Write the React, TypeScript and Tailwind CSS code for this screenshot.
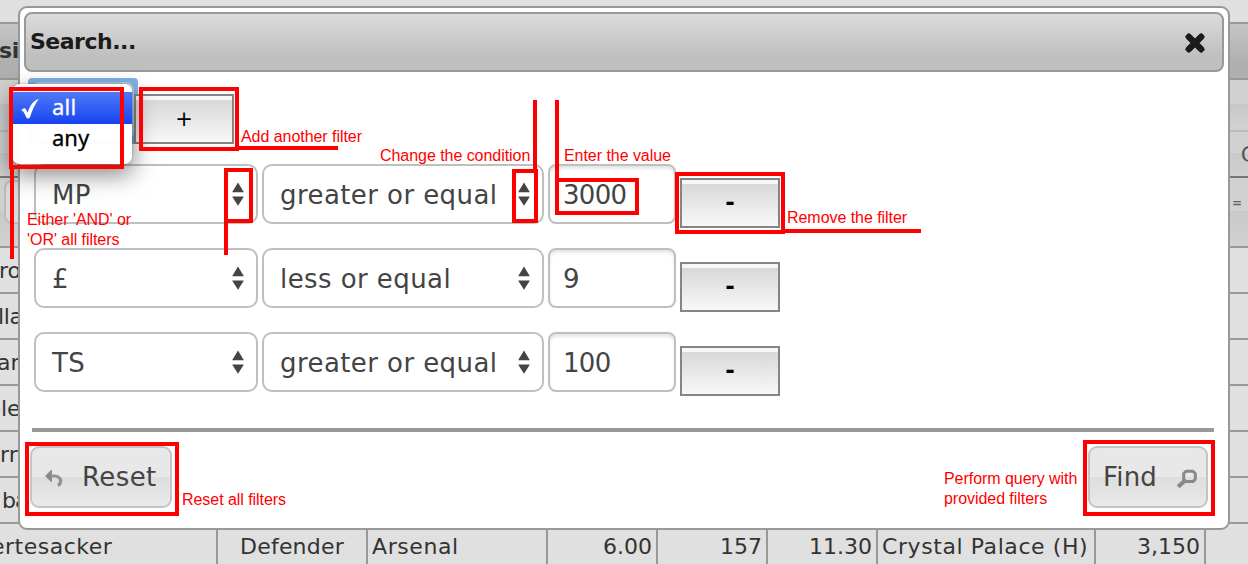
import React from 'react';

const filters = [
  { field: 'MP', op: 'greater or equal', value: '3000' },
  { field: '£', op: 'less or equal', value: '9' },
  { field: 'TS', op: 'greater or equal', value: '100' },
];

const clippedRows = [
  { text: 'ro', shift: '-ml-px' },
  { text: 'lla', shift: '-ml-[2px] tracking-[-0.3px]' },
  { text: 'ar', shift: '-ml-[3px]' },
  { text: 'ble', shift: '-ml-[13px]' },
  { text: 'rr', shift: 'ml-0' },
  { text: 'ba', shift: 'ml-[2px] tracking-[-1px]' },
];

function UpDown() {
  return (
    <svg width="12" height="24" viewBox="0 0 12 24" className="block shrink-0" fill="#444">
      <path d="M6 0.6L11.9 10.2H0.1Z" />
      <path d="M0.1 14.4H11.9L6 23.8Z" />
    </svg>
  );
}

function Select({ text, className }: { text: string; className: string }) {
  return (
    <div
      className={
        'flex h-[60px] items-center justify-between rounded-[10px] border-2 border-[#bfbfbf] bg-white pl-4 pr-3 text-[26px] text-[#444] ' +
        className
      }
    >
      <span className="whitespace-pre pt-0.5 tracking-[0.42px]">{text}</span>
      <UpDown />
    </div>
  );
}

function SquareButton({ label, textClass }: { label: string; textClass: string }) {
  return (
    <button className="flex h-[50px] w-[100px] flex-col border-2 border-[#858585] bg-[#f7f7f7] pt-1 text-black">
      <span
        className={
          'flex w-full flex-1 items-center justify-center bg-linear-to-b from-[#d8d8d8] to-[#f8f8f8] leading-none ' +
          textClass
        }
      >
        {label}
      </span>
    </button>
  );
}

function Cell({ children, className }: { children?: React.ReactNode; className: string }) {
  return (
    <div className={'flex h-full shrink-0 items-center whitespace-pre border-r-2 border-[#999] ' + className}>
      {children}
    </div>
  );
}

function Grid() {
  return (
    <div className="flex h-full w-full flex-col overflow-hidden bg-[#e0e0e0] text-[22px] text-[#333]">
      <div className="h-[22px] shrink-0" />
      <div className="flex h-[58px] shrink-0 items-center border-y-2 border-[#999] bg-linear-to-b from-[#c5c5c5] to-[#b0b0b0] to-70% pb-0.5 font-bold">
        <span className="-ml-px tracking-[-0.3px]">si</span>
      </div>
      <div className="h-[52px] shrink-0 border-b-2 border-[#bbb] bg-linear-to-b from-[#d1d1d1] from-48% via-[#c8c8c8] via-48% to-[#d2d2d2]" />
      <div className="flex h-[46px] shrink-0 items-center justify-end border-b-2 border-[#777] bg-linear-to-b from-[#d1d1d1] from-48% via-[#c9c9c9] via-48% to-[#d0d0d0]">
        <span className="-mr-[8px] text-[#555]">C</span>
      </div>
      <div className="flex h-[70px] shrink-0 justify-between border-b-2 border-[#999] bg-linear-to-b from-[#d1d1d1] from-48% via-[#c9c9c9] via-48% to-[#d2d2d2]">
        <div className="ml-1 mt-0.5 h-11 w-10 rounded-lg border-2 border-[#bbb] bg-[#dadada]" />
        <span className="mr-1.5 mt-[17px] text-[12px] font-bold leading-4 text-[#666]">=</span>
      </div>
      {clippedRows.map((row) => (
        <div key={row.text} className="flex h-[46px] shrink-0 items-center border-b-2 border-[#999]">
          <span className={row.shift}>{row.text}</span>
        </div>
      ))}
      <div className="flex h-[46px] shrink-0 items-center border-b-2 border-[#999]">
        <Cell className="w-[218px]"><span className="-ml-[9px] tracking-[0.5px]">ertesacker</span></Cell>
        <Cell className="w-[150px] justify-center tracking-[0.2px]">Defender</Cell>
        <Cell className="w-[180px] pl-1 tracking-[0.6px]">Arsenal</Cell>
        <Cell className="w-[110px] justify-end pr-1">6.00</Cell>
        <Cell className="w-[110px] justify-end pr-1">157</Cell>
        <Cell className="w-[110px] justify-end pr-1">11.30</Cell>
        <Cell className="w-[218px] pl-1 tracking-[0.58px]">Crystal Palace (H)</Cell>
        <Cell className="w-[110px] justify-end pr-1">3,150</Cell>
      </div>
    </div>
  );
}

function ActionButton({ children, className }: { children: React.ReactNode; className: string }) {
  return (
    <button
      className={
        'flex h-[62px] items-center rounded-[9px] border-2 border-[#c4c4c4] bg-linear-to-b from-[#e8e8e8] from-50% via-[#dedede] via-50% to-[#e9e9e9] text-[26px] text-[#444] ' +
        className
      }
    >
      {children}
    </button>
  );
}

function Dialog() {
  return (
    <div className="absolute left-[18px] top-[6px] flex h-[524px] w-[1212px] flex-col rounded-[9px] border-2 border-[#999] bg-white p-1">
      <div className="flex h-[60px] items-center justify-between rounded-[8px] border-2 border-[#999] bg-linear-to-b from-[#dcdcdc] to-[#bfbfbf] to-75% pl-1 pr-[17px] text-[22px] font-bold text-[#1b1b1b]">
        <span className="pb-px tracking-[-0.5px]">Search...</span>
        <svg width="20" height="20" viewBox="0 0 20 20" className="mt-0.5" stroke="#1b1b1b">
          <path d="M4 4L16 16M16 4L4 16" strokeWidth="6.4" strokeLinecap="round" />
          <path d="M3.6 3.6L16.4 16.4M16.4 3.6L3.6 16.4" strokeWidth="5" strokeLinecap="square" />
        </svg>
      </div>
      <div className="mt-[6px] flex h-[66px] items-start pl-1">
        <div className="h-[66px] w-[110px] rounded-[4px] bg-[#7fb0e3] p-1">
          <div className="h-full rounded-lg border-2 border-[#b7cfe6] bg-white" />
        </div>
        <div className="-ml-1 mt-4"><SquareButton label="+" textClass="text-[21px] pb-[3px]" /></div>
      </div>
      <div className="mt-5 flex flex-col gap-6 pl-[10px]">
        {filters.map((f) => (
          <div key={f.field} className="flex h-[60px] items-start gap-1">
            <Select text={f.field} className="w-56" />
            <Select text={f.op} className="w-[282px]" />
            <div className="flex h-[60px] w-32 items-center rounded-[8px] border-2 border-[#bfbfbf] pl-[13px] pt-0.5 text-[26px] tracking-[-0.7px] text-[#444] shadow-[inset_0_3px_4px_-1px_#ddd]">
              {f.value}
            </div>
            <div className="mt-3.5"><SquareButton label="-" textClass="text-[23px] font-bold pb-[5px]" /></div>
          </div>
        ))}
      </div>
      <div className="ml-2 mt-9 h-1 w-[1182px] shrink-0 bg-[#999]" />
      <div className="mt-3.5 flex justify-between pl-1.5 pr-4">
        <ActionButton className="w-[142px] pl-[13px]">
          <svg width="18" height="18" viewBox="0 0 18 18" className="mr-[19px] mt-0.5 shrink-0" fill="none">
            <path d="M0.5 7L6.5 1V13Z" fill="#888" stroke="#888" strokeWidth="0.8" strokeLinejoin="round" />
            <path d="M6 7H9.5C13.5 7.2 15.6 9.5 15.6 12C15.6 14 14.8 15.3 13 16.6" stroke="#929292" strokeWidth="3.2" />
          </svg>
          <span className="tracking-[0.4px]">Reset</span>
        </ActionButton>
        <ActionButton className="w-[120px] pl-[13px]">
          <span className="tracking-[0.2px]">Find</span>
          <svg width="22" height="20" viewBox="0 0 22 20" className="ml-[19px] mt-1 shrink-0" fill="none" stroke="#888">
            <path d="M10 2.2H17L19.3 4.5V10.3L17 12.6H10L7.7 10.3V4.5Z" strokeWidth="3" strokeLinejoin="round" />
            <path d="M8.2 12.2L2.2 17.7" strokeWidth="4.2" />
          </svg>
        </ActionButton>
      </div>
    </div>
  );
}

function Menu() {
  return (
    <div className="absolute left-3 top-[84px] flex h-20 w-[120px] flex-col rounded-[8px] bg-white/97 pt-2 font-['Noto_Sans','Open_Sans',sans-serif] text-[22px] leading-8 text-black shadow-[0_10px_24px_rgba(0,0,0,0.5),0_0_2px_rgba(0,0,0,0.4)]">
      <div className="flex h-8 items-center bg-linear-to-b from-[#5078f5] to-[#1741f0] pl-[9px] text-white">
        <svg width="18" height="22" viewBox="0 0 18 22" className="mr-[13px] mt-0.5" fill="#fff">
          <path d="M0.3 12.3C2.3 9.8 4.2 9.6 5.3 12L6.6 14.8C8.8 8 11.8 3 17.8 0.8C14 6 11 12.5 9 19.2C7.8 21 5.9 21 5.2 19.3C3.9 15.9 2.8 13.4 0.3 12.3Z" />
        </svg>
        <span className="pb-[5px] tracking-[0.2px] [-webkit-text-stroke:0.3px]">all</span>
      </div>
      <div className="-mt-[3px] h-8 pl-10 [-webkit-text-stroke:0.3px]">any</div>
    </div>
  );
}

const box = 'absolute border-4 border-[#f00] ';
const bar = 'absolute bg-[#f00] ';
const note = 'absolute whitespace-pre text-[16px] leading-5 tracking-[-0.05px] text-[#f00] ';

function Annotations() {
  return (
    <div className="font-['Liberation_Sans',Arial,sans-serif]">
      <div className={box + 'left-[9px] top-[87px] h-[82px] w-[115px]'} />
      <div className={bar + 'left-[10px] top-[165px] h-[94px] w-1'} />
      <div className={box + 'left-[139px] top-[87px] h-[64px] w-[100px]'} />
      <div className={bar + 'left-[237px] top-[146px] h-1 w-[101px]'} />
      <div className={box + 'left-[224px] top-[168px] h-[55px] w-[29px]'} />
      <div className={bar + 'left-[224px] top-[220px] h-[35px] w-1'} />
      <div className={box + 'left-[512px] top-[169px] h-[54px] w-[26px]'} />
      <div className={bar + 'left-[533px] top-[100px] h-[72px] w-1'} />
      <div className={box + 'left-[555px] top-[178px] h-[37px] w-[84px]'} />
      <div className={bar + 'left-[555px] top-[100px] h-20 w-1'} />
      <div className={box + 'left-[675px] top-[172px] h-[62px] w-[110px]'} />
      <div className={bar + 'left-[783px] top-[229px] h-1 w-[138px]'} />
      <div className={box + 'left-[25px] top-[442px] h-[74px] w-[154px]'} />
      <div className={box + 'left-[1083px] top-[440px] h-[76px] w-[132px]'} />
      <div className={note + 'left-[241px] top-[127px]'}>Add another filter</div>
      <div className={note + 'left-[380px] top-[146px]'}>Change the condition</div>
      <div className={note + 'left-[564px] top-[146px]'}>Enter the value</div>
      <div className={note + 'left-[787px] top-[208px]'}>Remove the filter</div>
      <div className={note + 'left-[27px] top-[210px]'}>{"Either 'AND' or\n'OR' all filters"}</div>
      <div className={note + 'left-[182px] top-[490px]'}>Reset all filters</div>
      <div className={note + 'left-[944px] top-[469px]'}>{'Perform query with\nprovided filters'}</div>
    </div>
  );
}

export default function App() {
  return (
    <div className="relative h-[564px] w-[1248px] overflow-hidden font-['DejaVu_Sans',Verdana,sans-serif]">
      <Grid />
      <Dialog />
      <Menu />
      <Annotations />
    </div>
  );
}
